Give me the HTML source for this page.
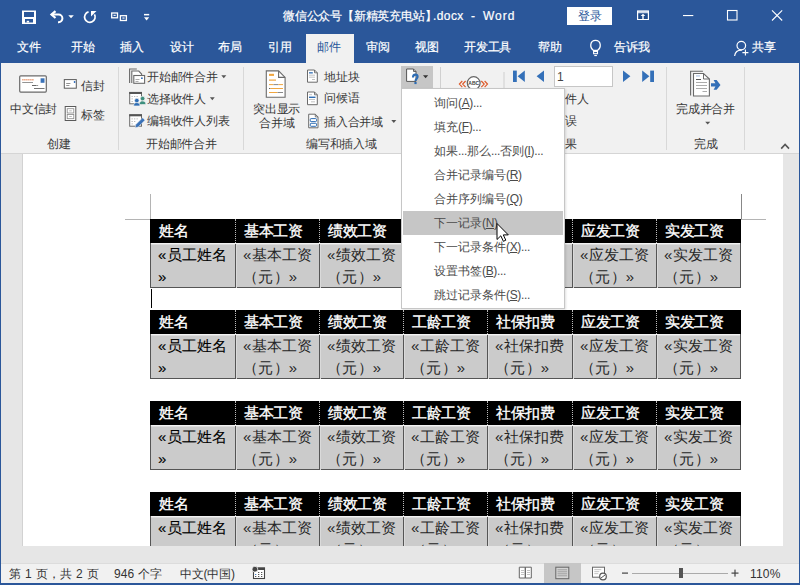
<!DOCTYPE html>
<html><head><meta charset="utf-8">
<style>
*{margin:0;padding:0;box-sizing:border-box}
html,body{width:800px;height:585px;overflow:hidden;background:#e6e6e6}
body{position:relative;font-family:"Liberation Sans",sans-serif;font-size:12px;color:#383838}
.a{position:absolute;white-space:nowrap;line-height:12px;letter-spacing:-0.2px}
#title{position:absolute;left:0;top:0;width:800px;height:63px;background:#2b579a}
#ribbon{position:absolute;left:0;top:63px;width:800px;height:91px;background:#f1f1f1;border-bottom:1px solid #d5d5d5}
#doc{position:absolute;left:0;top:154px;width:800px;height:409px;background:#e6e6e6}
#page{position:absolute;left:23px;top:154px;width:760px;height:392px;background:#fff}
#status{position:absolute;left:0;top:563px;width:800px;height:22px;background:#f1f1f1;border-top:1px solid #dcdcdc}
#lb{position:absolute;left:0;top:0;width:1px;height:585px;background:#2b579a}
#rb{position:absolute;left:799px;top:0;width:1px;height:585px;background:#2b579a}
#bb{position:absolute;left:0;top:583px;width:800px;height:2px;background:#2b579a}
.w{color:#fff;-webkit-text-stroke:0.2px #fff}
.sep{position:absolute;width:1px;background:#d8d8d8}
.tb{position:absolute;left:150px;width:591px;height:69px;background:#cbcbcb;border:1px solid #555;border-top:0}
.hd{position:absolute;height:24px;background:#000;color:#fff;-webkit-text-stroke:0.35px #fff;font-size:15px;line-height:24px;padding-left:9px;white-space:nowrap;letter-spacing:-0.4px}
.dt{position:absolute;height:44px;color:#262626;font-size:15px;line-height:22px;padding-left:8px;white-space:nowrap;letter-spacing:0.25px}
.dt.b{color:#000;-webkit-text-stroke:0.1px #000}
.vs{position:absolute;width:1px;height:24px;border-left:1px dotted #bbb}
.vd{position:absolute;width:1px;height:44px;background:#555}
.vl{position:absolute;width:1px;height:43px;background:#dadada}
.menu{position:absolute;left:401px;top:88px;width:164px;height:221px;background:#fff;border:1px solid #c6c6c6;box-shadow:1px 1px 2px rgba(0,0,0,0.12)}
.mi{position:absolute;left:32px;color:#4a4a4a;font-size:12px;line-height:12px;white-space:nowrap}
.mi u{text-decoration:underline}
.lt{letter-spacing:-0.35px}
</style></head><body>
<div id="title"></div>
<div id="ribbon"></div>
<div id="doc"></div>
<div id="page"></div>
<div style="position:absolute;left:22px;top:154px;width:1px;height:392px;background:#d2d2d2"></div>
<div id="status"></div>

<!-- title bar text -->
<div class="a w" style="left:283px;top:10px">微信公众号【新精英充电站】</div>
<div class="a w" style="left:433px;top:10px;letter-spacing:0.4px">.docx</div>
<div class="a w" style="left:471px;top:10px">-</div>
<div class="a w" style="left:483px;top:10px;letter-spacing:1px">Word</div>
<div style="position:absolute;left:567px;top:7px;width:45px;height:18px;background:#fff"></div>
<div class="a" style="left:578px;top:10px;color:#2b579a">登录</div>

<!-- tabs -->
<div style="position:absolute;left:306px;top:34px;width:48px;height:29px;background:#f1f1f1"></div>
<div class="a w" style="left:17px;top:41px">文件</div>
<div class="a w" style="left:71px;top:41px">开始</div>
<div class="a w" style="left:120px;top:41px">插入</div>
<div class="a w" style="left:170px;top:41px">设计</div>
<div class="a w" style="left:218px;top:41px">布局</div>
<div class="a w" style="left:268px;top:41px">引用</div>
<div class="a" style="left:317px;top:41px;color:#2b579a">邮件</div>
<div class="a w" style="left:366px;top:41px">审阅</div>
<div class="a w" style="left:415px;top:41px">视图</div>
<div class="a w" style="left:464px;top:41px">开发工具</div>
<div class="a w" style="left:538px;top:41px">帮助</div>
<div class="a w" style="left:614px;top:41px">告诉我</div>
<div class="a w" style="left:752px;top:41px">共享</div>

<!-- ribbon group labels -->
<div class="a" style="left:47px;top:138px">创建</div>
<div class="a" style="left:146px;top:138px">开始邮件合并</div>
<div class="a" style="left:306px;top:138px">编写和插入域</div>
<div class="a" style="left:694px;top:138px">完成</div>
<div class="sep" style="left:118px;top:67px;height:83px"></div>
<div class="sep" style="left:243px;top:67px;height:83px"></div>
<div class="sep" style="left:666px;top:67px;height:83px"></div>
<div class="sep" style="left:744px;top:67px;height:83px"></div>

<div class="a" style="left:10px;top:103px">中文信封</div>
<div class="a" style="left:81px;top:80px">信封</div>
<div class="a" style="left:81px;top:109px">标签</div>
<div class="a" style="left:147px;top:71px">开始邮件合并</div>
<div class="a" style="left:147px;top:93px">选择收件人</div>
<div class="a" style="left:147px;top:115px">编辑收件人列表</div>
<div class="a" style="left:253px;top:103px">突出显示</div>
<div class="a" style="left:259px;top:117px">合并域</div>
<div class="a" style="left:324px;top:71px">地址块</div>
<div class="a" style="left:324px;top:92px">问候语</div>
<div class="a" style="left:324px;top:116px">插入合并域</div>
<div class="a" style="left:565px;top:93px">件人</div>
<div class="a" style="left:565px;top:115px">误</div>
<div class="a" style="left:565px;top:138px">果</div>
<div class="a" style="left:676px;top:103px">完成并合并</div>

<!-- nav box -->
<div style="position:absolute;left:554px;top:66px;width:59px;height:21px;background:#fff;border:1px solid #c6c6c6"></div>
<div class="a" style="left:557px;top:71px;color:#444">1</div>

<!-- tables -->
<div style="position:absolute;left:0;top:154px;width:800px;height:392px;overflow:hidden"><div style="position:absolute;left:0;top:-154px;width:800px;height:700px">
<div class="tb" style="top:219px"></div>
<div style="position:absolute;left:151px;top:243px;width:589px;height:1px;background:#f2f2f2"></div>
<div style="position:absolute;left:151px;top:244px;width:589px;height:1px;background:#dcdcdc"></div>
<div class="hd" style="left:150px;top:219px;width:85px">姓名</div>
<div class="dt b" style="left:150px;top:244px;width:85px">«员工姓名<br>»</div>
<div class="hd" style="left:235px;top:219px;width:84px">基本工资</div>
<div class="dt" style="left:235px;top:244px;width:84px">«基本工资<br><span class="l2">（元）»</span></div>
<div class="vs" style="left:235px;top:219px"></div><div class="vd" style="left:235px;top:244px"></div><div class="vl" style="left:236px;top:245px"></div>
<div class="hd" style="left:319px;top:219px;width:84px">绩效工资</div>
<div class="dt" style="left:319px;top:244px;width:84px">«绩效工资<br><span class="l2">（元）»</span></div>
<div class="vs" style="left:319px;top:219px"></div><div class="vd" style="left:319px;top:244px"></div><div class="vl" style="left:320px;top:245px"></div>
<div class="hd" style="left:403px;top:219px;width:84px">工龄工资</div>
<div class="dt" style="left:403px;top:244px;width:84px">«工龄工资<br><span class="l2">（元）»</span></div>
<div class="vs" style="left:403px;top:219px"></div><div class="vd" style="left:403px;top:244px"></div><div class="vl" style="left:404px;top:245px"></div>
<div class="hd" style="left:487px;top:219px;width:85px">社保扣费</div>
<div class="dt" style="left:487px;top:244px;width:85px">«社保扣费<br><span class="l2">（元）»</span></div>
<div class="vs" style="left:487px;top:219px"></div><div class="vd" style="left:487px;top:244px"></div><div class="vl" style="left:488px;top:245px"></div>
<div class="hd" style="left:572px;top:219px;width:84px">应发工资</div>
<div class="dt" style="left:572px;top:244px;width:84px">«应发工资<br><span class="l2">（元）»</span></div>
<div class="vs" style="left:572px;top:219px"></div><div class="vd" style="left:572px;top:244px"></div><div class="vl" style="left:573px;top:245px"></div>
<div class="hd" style="left:656px;top:219px;width:85px">实发工资</div>
<div class="dt" style="left:656px;top:244px;width:85px">«实发工资<br><span class="l2">（元）»</span></div>
<div class="vs" style="left:656px;top:219px"></div><div class="vd" style="left:656px;top:244px"></div><div class="vl" style="left:657px;top:245px"></div>
<div class="tb" style="top:310px"></div>
<div style="position:absolute;left:151px;top:334px;width:589px;height:1px;background:#f2f2f2"></div>
<div style="position:absolute;left:151px;top:335px;width:589px;height:1px;background:#dcdcdc"></div>
<div class="hd" style="left:150px;top:310px;width:85px">姓名</div>
<div class="dt b" style="left:150px;top:335px;width:85px">«员工姓名<br>»</div>
<div class="hd" style="left:235px;top:310px;width:84px">基本工资</div>
<div class="dt" style="left:235px;top:335px;width:84px">«基本工资<br><span class="l2">（元）»</span></div>
<div class="vs" style="left:235px;top:310px"></div><div class="vd" style="left:235px;top:335px"></div><div class="vl" style="left:236px;top:336px"></div>
<div class="hd" style="left:319px;top:310px;width:84px">绩效工资</div>
<div class="dt" style="left:319px;top:335px;width:84px">«绩效工资<br><span class="l2">（元）»</span></div>
<div class="vs" style="left:319px;top:310px"></div><div class="vd" style="left:319px;top:335px"></div><div class="vl" style="left:320px;top:336px"></div>
<div class="hd" style="left:403px;top:310px;width:84px">工龄工资</div>
<div class="dt" style="left:403px;top:335px;width:84px">«工龄工资<br><span class="l2">（元）»</span></div>
<div class="vs" style="left:403px;top:310px"></div><div class="vd" style="left:403px;top:335px"></div><div class="vl" style="left:404px;top:336px"></div>
<div class="hd" style="left:487px;top:310px;width:85px">社保扣费</div>
<div class="dt" style="left:487px;top:335px;width:85px">«社保扣费<br><span class="l2">（元）»</span></div>
<div class="vs" style="left:487px;top:310px"></div><div class="vd" style="left:487px;top:335px"></div><div class="vl" style="left:488px;top:336px"></div>
<div class="hd" style="left:572px;top:310px;width:84px">应发工资</div>
<div class="dt" style="left:572px;top:335px;width:84px">«应发工资<br><span class="l2">（元）»</span></div>
<div class="vs" style="left:572px;top:310px"></div><div class="vd" style="left:572px;top:335px"></div><div class="vl" style="left:573px;top:336px"></div>
<div class="hd" style="left:656px;top:310px;width:85px">实发工资</div>
<div class="dt" style="left:656px;top:335px;width:85px">«实发工资<br><span class="l2">（元）»</span></div>
<div class="vs" style="left:656px;top:310px"></div><div class="vd" style="left:656px;top:335px"></div><div class="vl" style="left:657px;top:336px"></div>
<div class="tb" style="top:401px"></div>
<div style="position:absolute;left:151px;top:425px;width:589px;height:1px;background:#f2f2f2"></div>
<div style="position:absolute;left:151px;top:426px;width:589px;height:1px;background:#dcdcdc"></div>
<div class="hd" style="left:150px;top:401px;width:85px">姓名</div>
<div class="dt b" style="left:150px;top:426px;width:85px">«员工姓名<br>»</div>
<div class="hd" style="left:235px;top:401px;width:84px">基本工资</div>
<div class="dt" style="left:235px;top:426px;width:84px">«基本工资<br><span class="l2">（元）»</span></div>
<div class="vs" style="left:235px;top:401px"></div><div class="vd" style="left:235px;top:426px"></div><div class="vl" style="left:236px;top:427px"></div>
<div class="hd" style="left:319px;top:401px;width:84px">绩效工资</div>
<div class="dt" style="left:319px;top:426px;width:84px">«绩效工资<br><span class="l2">（元）»</span></div>
<div class="vs" style="left:319px;top:401px"></div><div class="vd" style="left:319px;top:426px"></div><div class="vl" style="left:320px;top:427px"></div>
<div class="hd" style="left:403px;top:401px;width:84px">工龄工资</div>
<div class="dt" style="left:403px;top:426px;width:84px">«工龄工资<br><span class="l2">（元）»</span></div>
<div class="vs" style="left:403px;top:401px"></div><div class="vd" style="left:403px;top:426px"></div><div class="vl" style="left:404px;top:427px"></div>
<div class="hd" style="left:487px;top:401px;width:85px">社保扣费</div>
<div class="dt" style="left:487px;top:426px;width:85px">«社保扣费<br><span class="l2">（元）»</span></div>
<div class="vs" style="left:487px;top:401px"></div><div class="vd" style="left:487px;top:426px"></div><div class="vl" style="left:488px;top:427px"></div>
<div class="hd" style="left:572px;top:401px;width:84px">应发工资</div>
<div class="dt" style="left:572px;top:426px;width:84px">«应发工资<br><span class="l2">（元）»</span></div>
<div class="vs" style="left:572px;top:401px"></div><div class="vd" style="left:572px;top:426px"></div><div class="vl" style="left:573px;top:427px"></div>
<div class="hd" style="left:656px;top:401px;width:85px">实发工资</div>
<div class="dt" style="left:656px;top:426px;width:85px">«实发工资<br><span class="l2">（元）»</span></div>
<div class="vs" style="left:656px;top:401px"></div><div class="vd" style="left:656px;top:426px"></div><div class="vl" style="left:657px;top:427px"></div>
<div class="tb" style="top:492px"></div>
<div style="position:absolute;left:151px;top:516px;width:589px;height:1px;background:#f2f2f2"></div>
<div style="position:absolute;left:151px;top:517px;width:589px;height:1px;background:#dcdcdc"></div>
<div class="hd" style="left:150px;top:492px;width:85px">姓名</div>
<div class="dt b" style="left:150px;top:517px;width:85px">«员工姓名<br>»</div>
<div class="hd" style="left:235px;top:492px;width:84px">基本工资</div>
<div class="dt" style="left:235px;top:517px;width:84px">«基本工资<br><span class="l2">（元）»</span></div>
<div class="vs" style="left:235px;top:492px"></div><div class="vd" style="left:235px;top:517px"></div><div class="vl" style="left:236px;top:518px"></div>
<div class="hd" style="left:319px;top:492px;width:84px">绩效工资</div>
<div class="dt" style="left:319px;top:517px;width:84px">«绩效工资<br><span class="l2">（元）»</span></div>
<div class="vs" style="left:319px;top:492px"></div><div class="vd" style="left:319px;top:517px"></div><div class="vl" style="left:320px;top:518px"></div>
<div class="hd" style="left:403px;top:492px;width:84px">工龄工资</div>
<div class="dt" style="left:403px;top:517px;width:84px">«工龄工资<br><span class="l2">（元）»</span></div>
<div class="vs" style="left:403px;top:492px"></div><div class="vd" style="left:403px;top:517px"></div><div class="vl" style="left:404px;top:518px"></div>
<div class="hd" style="left:487px;top:492px;width:85px">社保扣费</div>
<div class="dt" style="left:487px;top:517px;width:85px">«社保扣费<br><span class="l2">（元）»</span></div>
<div class="vs" style="left:487px;top:492px"></div><div class="vd" style="left:487px;top:517px"></div><div class="vl" style="left:488px;top:518px"></div>
<div class="hd" style="left:572px;top:492px;width:84px">应发工资</div>
<div class="dt" style="left:572px;top:517px;width:84px">«应发工资<br><span class="l2">（元）»</span></div>
<div class="vs" style="left:572px;top:492px"></div><div class="vd" style="left:572px;top:517px"></div><div class="vl" style="left:573px;top:518px"></div>
<div class="hd" style="left:656px;top:492px;width:85px">实发工资</div>
<div class="dt" style="left:656px;top:517px;width:85px">«实发工资<br><span class="l2">（元）»</span></div>
<div class="vs" style="left:656px;top:492px"></div><div class="vd" style="left:656px;top:517px"></div><div class="vl" style="left:657px;top:518px"></div>
</div></div>
<!-- crop marks -->
<div style="position:absolute;left:150px;top:194px;width:1px;height:25px;background:#b4b4b4"></div>
<div style="position:absolute;left:125px;top:219px;width:25px;height:1px;background:#b4b4b4"></div>
<div style="position:absolute;left:741px;top:194px;width:1px;height:25px;background:#888"></div>
<div style="position:absolute;left:741px;top:219px;width:25px;height:1px;background:#b4b4b4"></div>
<div style="position:absolute;left:151px;top:289px;width:1px;height:19px;background:#000"></div>

<!-- icons -->
<svg style="position:absolute;left:0;top:0" width="800" height="585" viewBox="0 0 800 585">
<!-- QAT save -->
<rect x="22" y="10.5" width="14" height="13.5" fill="#fff"/>
<rect x="24" y="12" width="10" height="5" fill="#2b579a"/>
<rect x="25" y="19" width="8" height="3.5" fill="#2b579a"/>
<rect x="26.7" y="20.8" width="2.4" height="1.7" fill="#fff"/>
<!-- undo -->
<path d="M55.5 11.2 L51.5 14.6 L55.5 18" fill="none" stroke="#fff" stroke-width="2.2"/>
<path d="M51.5 14.6 H58.6 A3.8 3.8 0 0 1 58.6 22.2 H58" fill="none" stroke="#fff" stroke-width="2"/>
<path d="M68.3 15.2 H73.8 L71.05 18.2 Z" fill="#fff"/>
<!-- redo -->
<path d="M88.54 11.93 A5.3 5.3 0 1 0 94.45 14.37" fill="none" stroke="#fff" stroke-width="1.7"/>
<path d="M91 11 H96.5 L91 16.5 Z" fill="#fff"/>
<!-- touch -->
<rect x="111.7" y="13" width="5.8" height="4.8" fill="none" stroke="#fff" stroke-width="1.3"/>
<rect x="113.5" y="14.8" width="2.2" height="1.1" fill="#fff"/>
<rect x="120.4" y="15.7" width="6" height="4.8" fill="none" stroke="#fff" stroke-width="1.3"/>
<rect x="122.4" y="17.5" width="2.2" height="1.1" fill="#fff"/>
<!-- customize -->
<rect x="144" y="13.9" width="5.2" height="1.5" fill="#fff"/>
<path d="M144 17.2 H149.2 L146.6 20.5 Z" fill="#fff"/>
<!-- ribbon display options -->
<rect x="637" y="10.4" width="12" height="9.6" fill="#fff"/>
<rect x="638.2" y="11.4" width="9.6" height="1.6" fill="#c9d5e8"/>
<rect x="638.2" y="13.2" width="9.6" height="5.8" fill="#1f4a8a"/>
<path d="M643 13.8 L645.3 16 H643.7 V19 H642.3 V16 H640.7 Z" fill="#fff"/>
<!-- window controls -->
<rect x="683" y="15" width="10.3" height="1.1" fill="#fff"/>
<rect x="727.5" y="10.5" width="9.5" height="9.5" fill="none" stroke="#fff" stroke-width="1.1"/>
<path d="M772 10.3 L782.2 20.5 M782.2 10.3 L772 20.5" stroke="#fff" stroke-width="1.1"/>
<!-- bulb -->
<path d="M593.3 50.3 C589.5 47.5 589.8 40.3 595.5 40.3 C601.2 40.3 601.5 47.5 597.7 50.3 Z" fill="none" stroke="#fff" stroke-width="1.3"/>
<rect x="593.6" y="51.5" width="3.9" height="2.2" fill="none" stroke="#fff" stroke-width="1.1"/>
<rect x="594.3" y="55" width="2.6" height="1.1" fill="#fff"/>
<!-- person -->
<circle cx="741.3" cy="45.6" r="4.3" fill="none" stroke="#fff" stroke-width="1.2"/>
<path d="M734.6 56 C735.2 52 738 50 741.8 50.2" fill="none" stroke="#fff" stroke-width="1.2"/>
<path d="M742.4 52.6 H748.4 M745.4 49.6 V55.6" stroke="#fff" stroke-width="1.1"/>

<!-- chinese envelope -->
<rect x="19.7" y="75.8" width="26.6" height="16.3" rx="1" fill="#fff" stroke="#6a6a6a" stroke-width="1.2"/>
<g fill="#e0703a"><rect x="22.3" y="79.2" width="1.2" height="1.2"/><rect x="24.3" y="79.2" width="1.2" height="1.2"/><rect x="26.3" y="79.2" width="1.2" height="1.2"/><rect x="28.3" y="79.2" width="1.2" height="1.2"/><rect x="30.3" y="79.2" width="1.2" height="1.2"/><rect x="32.3" y="79.2" width="1.2" height="1.2"/></g>
<rect x="40.6" y="78.3" width="3.9" height="4.5" fill="#3a72b8"/>
<rect x="22.2" y="82" width="10.8" height="0.9" fill="#888"/>
<rect x="32" y="85" width="4.6" height="1" fill="#666"/>
<rect x="37.3" y="85" width="0.8" height="1" fill="#666"/>
<rect x="34" y="88" width="10.5" height="0.9" fill="#666"/>
<!-- envelope small -->
<rect x="64.3" y="79.6" width="12" height="8.6" fill="#fff" stroke="#5a5a5a" stroke-width="1"/>
<circle cx="74.6" cy="82" r="0.9" fill="#2b68b8"/>
<rect x="66.2" y="83.2" width="4.2" height="0.8" fill="#777"/>
<rect x="66.2" y="85.2" width="3.2" height="0.8" fill="#777"/>
<!-- label small -->
<rect x="65.2" y="106.5" width="10.6" height="14" fill="#fff" stroke="#5a5a5a" stroke-width="1"/>
<rect x="67.2" y="108.7" width="6.6" height="4.3" fill="none" stroke="#888" stroke-width="0.8"/>
<rect x="67.2" y="114.4" width="6.6" height="4.3" fill="none" stroke="#888" stroke-width="0.8"/>
<rect x="69.2" y="110.6" width="2.6" height="0.6" fill="#888"/>
<rect x="69.2" y="116.3" width="2.6" height="0.6" fill="#888"/>

<!-- start mail merge -->
<path d="M129.6 83 V69 H136.8" fill="none" stroke="#6a6a6a" stroke-width="1.1"/>
<path d="M131.8 83 V71 H138.8 L141.6 74 V75.5" fill="#fff" stroke="#6a6a6a" stroke-width="1.1"/>
<rect x="133.8" y="75.5" width="10.8" height="7.8" fill="#fff" stroke="#6a6a6a" stroke-width="1.1"/>
<circle cx="141.9" cy="78.2" r="0.9" fill="#2b68b8"/>
<rect x="135.5" y="79.3" width="4" height="0.7" fill="#888"/>
<rect x="135.5" y="81" width="3" height="0.7" fill="#888"/>
<!-- select recipients -->
<rect x="129.7" y="92.4" width="11.8" height="11.4" fill="#fff" stroke="#6a6a6a" stroke-width="1"/>
<rect x="129.2" y="92" width="12.8" height="2" fill="#555"/>
<g fill="#aaa"><rect x="131.5" y="96" width="1.3" height="0.8"/><rect x="134" y="96" width="1.3" height="0.8"/><rect x="136.5" y="96" width="1.3" height="0.8"/><rect x="131.5" y="98.5" width="1.3" height="0.8"/><rect x="131.5" y="101" width="1.3" height="0.8"/></g>
<circle cx="142.6" cy="98.6" r="2.3" fill="#3d8f7e" stroke="#f1f1f1" stroke-width="0.7"/>
<path d="M139.2 104.6 C139.2 101.8 140.9 101 142.6 101 C144.3 101 145.9 101.8 145.9 104.6 Z" fill="#3d8f7e" stroke="#f1f1f1" stroke-width="0.7"/>
<circle cx="136.8" cy="100.6" r="2.3" fill="#2e6db4" stroke="#f1f1f1" stroke-width="0.7"/>
<path d="M133.6 106 C133.6 103.4 135.1 102.6 136.8 102.6 C138.5 102.6 140 103.4 140 106 Z" fill="#2e6db4" stroke="#f1f1f1" stroke-width="0.7"/>
<!-- edit recipients -->
<rect x="129.7" y="114.8" width="11.8" height="11.4" fill="#fff" stroke="#6a6a6a" stroke-width="1"/>
<rect x="129.2" y="114.3" width="12.8" height="2" fill="#555"/>
<g fill="#aaa"><rect x="131.5" y="118.5" width="1.3" height="0.8"/><rect x="134" y="118.5" width="1.3" height="0.8"/><rect x="136.5" y="118.5" width="1.3" height="0.8"/><rect x="131.5" y="121" width="1.3" height="0.8"/><rect x="134" y="121" width="1.3" height="0.8"/><rect x="131.5" y="123.5" width="1.3" height="0.8"/></g>
<path d="M135.2 127.8 L135.8 124.6 L142.6 117.8 L145 120.2 L138.2 127 Z" fill="#3a72b8" stroke="#f1f1f1" stroke-width="0.5"/>

<!-- highlight merge fields -->
<path d="M266.3 70.9 H278.6 L285.1 77.4 V97.2 H266.3 Z" fill="#fff" stroke="#6a6a6a" stroke-width="1.1"/>
<path d="M278.6 70.9 V77.4 H285.1" fill="none" stroke="#6a6a6a" stroke-width="1.1"/>
<rect x="269" y="73.8" width="5" height="2.1" fill="#f0a640"/>
<rect x="269" y="79.5" width="7" height="1.2" fill="#f0a640"/>
<rect x="269" y="84.1" width="4.5" height="1" fill="#f0a640"/><rect x="273.5" y="84.1" width="5" height="1" fill="#888"/><rect x="278.5" y="84.1" width="4.5" height="1" fill="#f0a640"/>
<rect x="269" y="88" width="1.5" height="1" fill="#666"/><rect x="270.5" y="88" width="12.5" height="1" fill="#f0a640"/>
<rect x="269" y="92" width="8.5" height="1" fill="#f0a640"/><rect x="277.5" y="92" width="5.5" height="1" fill="#888"/>
<!-- address block -->
<path d="M307.5 70 H314.5 L317.3 72.8 V82.2 H307.5 Z" fill="#fff" stroke="#6a6a6a" stroke-width="1"/>
<path d="M314.5 70 V72.8 H317.3" fill="none" stroke="#6a6a6a" stroke-width="0.9"/>
<rect x="309" y="72.2" width="3.8" height="1.3" fill="#2e6db4"/>
<rect x="309" y="74.8" width="6" height="0.6" fill="#999"/><rect x="309" y="76.8" width="6" height="0.6" fill="#999"/><rect x="312" y="79" width="3" height="0.6" fill="#999"/>
<!-- greeting -->
<path d="M307.5 92 H314.5 L317.3 94.8 V104.7 H307.5 Z" fill="#fff" stroke="#6a6a6a" stroke-width="1"/>
<path d="M314.5 92 V94.8 H317.3" fill="none" stroke="#6a6a6a" stroke-width="0.9"/>
<rect x="309" y="94.5" width="3" height="0.6" fill="#999"/>
<rect x="309" y="96.6" width="6.5" height="1.4" fill="#2e6db4"/>
<rect x="309" y="99.4" width="6" height="0.6" fill="#999"/><rect x="311" y="101.6" width="4" height="0.6" fill="#999"/>
<!-- insert merge field -->
<path d="M308.7 114.2 H315.3 L318 116.9 V127.8 H308.7 Z" fill="#fff" stroke="#6a6a6a" stroke-width="1"/>
<path d="M315.3 114.2 V116.9 H318" fill="none" stroke="#6a6a6a" stroke-width="0.9"/>
<rect x="310.3" y="118.6" width="6.2" height="3" rx="0.8" fill="#fff" stroke="#2e6db4" stroke-width="1"/>
<rect x="310.3" y="123.3" width="6.2" height="3" rx="0.8" fill="#fff" stroke="#2e6db4" stroke-width="1"/>

<!-- dropdown arrows -->
<path d="M221.3 75.3 H226.3 L223.8 78.3 Z" fill="#555"/>
<path d="M209.9 97.3 H214.7 L212.3 100.2 Z" fill="#555"/>
<path d="M391.3 120 H396.3 L393.8 123 Z" fill="#555"/>
<path d="M705.2 121.7 H710.2 L707.7 124.6 Z" fill="#555"/>

<!-- rules button (pressed) -->
<rect x="401" y="66" width="32" height="22" fill="#c6c6c6"/>
<path d="M406.6 69 H413.5 L416 71.5 V81.4 H406.6 Z" fill="#fff" stroke="#555" stroke-width="1"/>
<path d="M413.5 69 V71.5 H416" fill="none" stroke="#555" stroke-width="0.9"/>
<path d="M413 77.4 C413 75.3 414 74.6 415.3 74.6 C416.7 74.6 417.6 75.5 417.6 76.8 C417.6 78.6 415.5 78.8 415.5 81" fill="none" stroke="#2e6db4" stroke-width="2.1"/><rect x="414.4" y="82" width="2.2" height="2.1" fill="#2e6db4"/>
<path d="M423 75.2 H428.2 L425.6 78.2 Z" fill="#333"/>
<rect x="440" y="67" width="1" height="21" fill="#d0d0d0"/>
<!-- ABC -->
<circle cx="473.7" cy="83.1" r="6.4" fill="#fff" stroke="#666" stroke-width="1.2"/>
<text x="473.7" y="85" font-family="Liberation Sans" font-size="5" font-weight="bold" text-anchor="middle" fill="#444">ABC</text>
<path d="M462.3 81 L459.4 84.1 L462.3 87.2 M465.6 81 L462.7 84.1 L465.6 87.2" fill="none" stroke="#de5b2b" stroke-width="1.2"/>
<path d="M481.3 81 L484.2 84.1 L481.3 87.2 M484.6 81 L487.5 84.1 L484.6 87.2" fill="none" stroke="#de5b2b" stroke-width="1.2"/>
<rect x="503.5" y="72" width="1" height="17" fill="#d0d0d0"/>
<!-- nav -->
<rect x="513" y="70.6" width="3.8" height="11.4" fill="#3470b8"/>
<path d="M517.6 76.3 L524.8 70.6 V82 Z" fill="#3470b8"/>
<path d="M536.6 76.3 L544 70.6 V82 Z" fill="#3470b8"/>
<path d="M630.4 76.3 L623 70.6 V82 Z" fill="#3470b8"/>
<path d="M649.4 76.3 L642.2 70.6 V82 Z" fill="#3470b8"/>
<rect x="650.2" y="70.6" width="3.8" height="11.4" fill="#3470b8"/>
<!-- finish merge -->
<path d="M690.6 95.4 V71.2 H702.9" fill="none" stroke="#6a6a6a" stroke-width="1.1"/>
<path d="M693.5 73.5 H703.5 L709.4 79 V96 H693.5 Z" fill="#fff" stroke="#6a6a6a" stroke-width="1.1"/>
<path d="M703.5 73.5 V79 H709.4" fill="none" stroke="#6a6a6a" stroke-width="1"/>
<rect x="696" y="75.6" width="4" height="0.7" fill="#7a9bd0"/>
<rect x="696" y="79" width="5" height="1" fill="#555"/>
<rect x="696" y="82.2" width="11" height="0.7" fill="#888"/>
<rect x="696" y="85.1" width="11" height="0.7" fill="#888"/>
<rect x="696" y="88" width="11" height="0.7" fill="#888"/>
<rect x="702.5" y="91.1" width="4.5" height="0.7" fill="#888"/>
<path d="M711 83.2 H715.4 L713.6 80 H716.6 L720.5 84.9 L716.6 89.8 H713.6 L715.4 86.6 H711 Z" fill="#3470b8"/>
<!-- collapse ribbon chevron -->
<path d="M781.2 148.6 L785.1 144.4 L789 148.6" fill="none" stroke="#555" stroke-width="1.6"/>

<!-- status icons -->
<rect x="253.5" y="568" width="11" height="10.5" fill="#fff" stroke="#444" stroke-width="1.1"/>
<rect x="253" y="567.6" width="12" height="2.4" fill="#444"/>
<g fill="#555"><rect x="258" y="572" width="1.3" height="1"/><rect x="261" y="572" width="1.3" height="1"/><rect x="255" y="574" width="1.3" height="1" fill="#4a7fc0"/><rect x="258" y="574" width="1.3" height="1"/><rect x="261" y="574" width="1.3" height="1"/><rect x="255" y="576" width="1.3" height="1"/><rect x="258" y="576" width="1.3" height="1"/><rect x="261" y="576" width="1.3" height="1"/></g>
<circle cx="254.9" cy="569.2" r="2.9" fill="#444" stroke="#f1f1f1" stroke-width="0.8"/>
<!-- read mode -->
<path d="M519.3 567.2 H525.3 V578 H519.3 Z M525.3 567.2 H531.3 V578 H525.3 Z" fill="#fff" stroke="#666" stroke-width="1"/>
<g fill="#999"><rect x="521" y="570" width="3" height="0.6"/><rect x="521" y="572" width="3" height="0.6"/><rect x="521" y="574" width="3" height="0.6"/><rect x="527" y="570" width="3" height="0.6"/><rect x="527" y="572" width="3" height="0.6"/><rect x="527" y="574" width="3" height="0.6"/></g>
<!-- print layout -->
<rect x="544" y="563" width="37" height="20" fill="#c6c6c6"/>
<rect x="555.8" y="567.2" width="13" height="11.5" fill="#d4d4d4" stroke="#666" stroke-width="1"/>
<g fill="#888"><rect x="557.5" y="569.5" width="9.6" height="0.7"/><rect x="557.5" y="571.5" width="9.6" height="0.7"/><rect x="557.5" y="573.5" width="9.6" height="0.7"/><rect x="557.5" y="575.5" width="9.6" height="0.7"/></g>
<!-- web layout -->
<rect x="592.5" y="567.2" width="12" height="10" fill="#fff" stroke="#666" stroke-width="1"/>
<g fill="#999"><rect x="594.3" y="569.5" width="7" height="0.6"/><rect x="594.3" y="571.5" width="5" height="0.6"/><rect x="594.3" y="573.5" width="4" height="0.6"/></g>
<circle cx="603" cy="576.5" r="3.3" fill="#fff" stroke="#555" stroke-width="1.2"/>
<path d="M601 578 L605 575" stroke="#555" stroke-width="1"/>
<!-- zoom -->
<rect x="622" y="572.5" width="6" height="1.2" fill="#444"/>
<rect x="632" y="573" width="96" height="1" fill="#aaa"/>
<rect x="679" y="568" width="4" height="10" fill="#555"/>
<rect x="731.5" y="572.5" width="7" height="1.2" fill="#444"/>
<rect x="734.4" y="569.6" width="1.2" height="7" fill="#444"/>
</svg>

<!-- menu button -->
<div class="menu">
<div class="mi" style="top:8px">询问<span class="lt">(<u>A</u>)...</span></div>
<div class="mi" style="top:32px">填充<span class="lt">(<u>F</u>)...</span></div>
<div class="mi" style="top:56px">如果<span class="lt">...</span>那么<span class="lt">...</span>否则<span class="lt">(<u>I</u>)...</span></div>
<div class="mi" style="top:80px">合并记录编号<span class="lt">(<u>R</u>)</span></div>
<div class="mi" style="top:104px">合并序列编号<span class="lt">(<u>Q</u>)</span></div>
<div style="position:absolute;left:1px;top:122px;width:160px;height:23.5px;background:#c6c6c6"></div>
<div class="mi" style="top:128px">下一记录<span class="lt">(<u>N</u>)</span></div>
<div class="mi" style="top:152px">下一记录条件<span class="lt">(<u>X</u>)...</span></div>
<div class="mi" style="top:176px">设置书签<span class="lt">(<u>B</u>)...</span></div>
<div class="mi" style="top:200px">跳过记录条件<span class="lt">(<u>S</u>)...</span></div>
</div>
<svg style="position:absolute;left:0;top:0" width="800" height="585"><path d="M497 223.5 V239.5 L500.8 235.8 L503.4 241.3 L505.8 240.2 L503.3 234.9 L508.3 234.9 Z" fill="#fff" stroke="#000" stroke-width="1" stroke-linejoin="miter"/></svg>

<!-- status -->
<div class="a" style="left:9px;top:568px;letter-spacing:0.3px;color:#333">第 1 页，共 2 页</div>
<div class="a" style="left:114px;top:568px;letter-spacing:0.1px;color:#333">946 个字</div>
<div class="a" style="left:180px;top:568px;color:#333">中文(中国)</div>
<div class="a" style="left:750px;top:568px;color:#333;letter-spacing:0.2px">110%</div>

<div id="lb"></div><div id="rb"></div><div id="bb"></div>
</body></html>
